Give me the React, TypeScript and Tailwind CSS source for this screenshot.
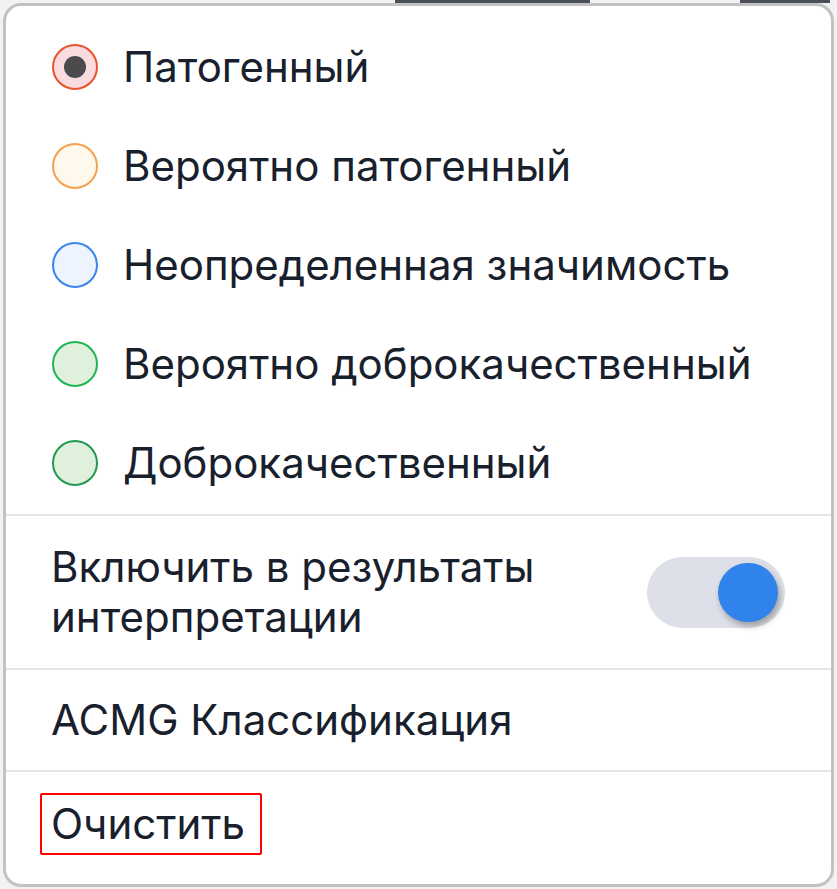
import React, { useState } from "react";

type Option = {
  label: string;
  border: string;
  fill: string;
};

const options: Option[] = [
  { label: "Патогенный", border: "border-[#e8532a]", fill: "bg-[#f9dbe0]" },
  { label: "Вероятно патогенный", border: "border-[#f5a04c]", fill: "bg-[#fff8ec]" },
  { label: "Неопределенная значимость", border: "border-[#3a84ec]", fill: "bg-[#edf4fe]" },
  { label: "Вероятно доброкачественный", border: "border-[#1fb552]", fill: "bg-[#dff0dc]" },
  { label: "Доброкачественный", border: "border-[#21994f]", fill: "bg-[#dff0dc]" },
];

export default function App() {
  const [selected, setSelected] = useState(0);
  const [include, setInclude] = useState(true);

  return (
    <div
      className="relative h-[889px] w-[837px] overflow-hidden bg-[#f1f2f4]"
      style={{ fontFamily: "Inter, 'Noto Sans', sans-serif" }}
    >
      {/* bits of the page behind the popup */}
      <div className="absolute left-[395px] top-0 h-[3px] w-[195px] bg-[#4a4f58]" />
      <div className="absolute left-[740px] top-0 h-[3px] w-[90px] bg-[#4a4f58]" />

      <div className="relative ml-[3px] mt-[3px] flex h-[884px] w-[831px] flex-col rounded-[18px] border-[3px] border-[#c2c2c2] bg-white text-[42px] leading-[50px] text-[#18202c]">
        {/* Radio list */}
        <div className="flex flex-col pt-[11px]">
          {options.map((o, i) => (
            <button
              key={o.label}
              onClick={() => setSelected(i)}
              className="flex h-[99px] items-center gap-[25px] pl-[46px] text-left"
            >
              <span
                className={`flex h-[46px] w-[46px] shrink-0 items-center justify-center rounded-full border-[2.5px] ${o.border} ${o.fill}`}
              >
                {selected === i && (
                  <span className="h-[22px] w-[22px] rounded-full bg-[#4b4b4d]" />
                )}
              </span>
              <span>{o.label}</span>
            </button>
          ))}
        </div>

        <div className="mt-[2px] h-[2px] bg-[#e3e5eb]" />

        {/* Include toggle */}
        <div className="flex h-[152px] items-center justify-between pl-[45px] pr-[46px]">
          <span>
            Включить в результаты
            <br />
            интерпретации
          </span>
          <button
            onClick={() => setInclude(!include)}
            className="relative h-[71px] w-[138px] rounded-full bg-[#dde0e8]"
          >
            <span
              className={`absolute top-[6px] h-[59px] w-[60px] rounded-full bg-[#2f83ea] shadow-[2px_4px_6px_rgba(0,0,0,0.3)] ${
                include ? "left-[71px]" : "left-[6px]"
              }`}
            />
          </button>
        </div>

        <div className="h-[2px] bg-[#e3e5eb]" />

        <div className="flex h-[100px] items-center pl-[45px]">ACMG Классификация</div>

        <div className="h-[2px] bg-[#e3e5eb]" />

        <div className="pl-[34px] pt-[21px]">
          <button className="rounded-[2px] border-[2.5px] border-[#ff0000] py-[4px] pl-[9px] pr-[15px] leading-[50px]">
            Очистить
          </button>
        </div>
      </div>
    </div>
  );
}
